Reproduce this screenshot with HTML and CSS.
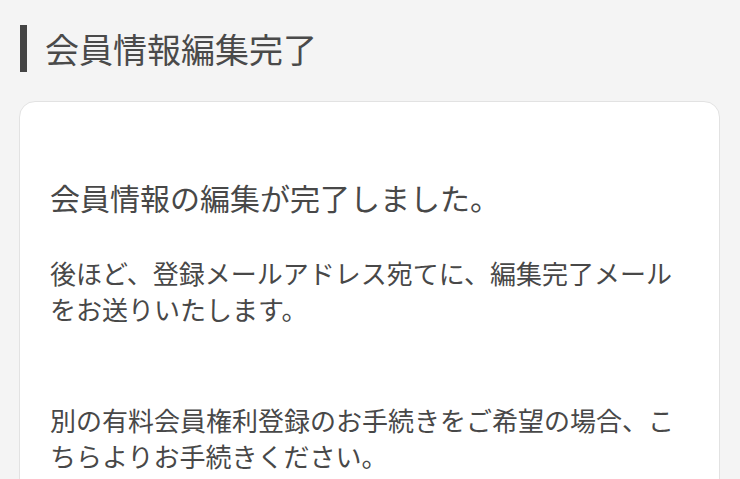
FILE: index.html
```html
<!DOCTYPE html>
<html lang="ja">
<head>
    <meta charset="UTF-8">
    <meta name="viewport" content="width=device-width, initial-scale=1.0">
    <title>会員情報編集完了</title>
    <link rel="stylesheet" href="styles.css">
</head>
<body>
    <div class="page">
        <h1 class="page-title">会員情報編集完了</h1>

        <div class="card">
            <h2 class="card-heading">会員情報の編集が完了しました。</h2>
            <p class="message">後ほど、登録メールアドレス宛てに、編集完了メールをお送りいたします。</p>
            <p class="message message-gap">別の有料会員権利登録のお手続きをご希望の場合、こちらよりお手続きください。</p>
        </div>
    </div>
</body>
</html>
```

FILE: styles.css
```css
body {
    margin: 0;
    background: #f4f4f4;
    font-family: "Noto Sans CJK JP", "Noto Sans", sans-serif;
    color: #484848;
}
.page {
    padding: 25px 20px 0 19px;
}
.page-title {
    margin: 0 0 0 1px;
    padding-left: 18px;
    border-left: 7px solid #444;
    height: 47px;
    line-height: 47px;
    font-size: 34px;
    font-weight: normal;
    color: #4a4a4a;
}
.card {
    margin-top: 29px;
    background: #fff;
    border: 1px solid #e2e2e2;
    border-radius: 16px;
    padding: 75px 30px 40px;
}
.card-heading {
    margin: 0;
    font-size: 30px;
    line-height: 40px;
    font-weight: normal;
}
.message {
    margin: 38px 0 0;
    font-size: 26px;
    line-height: 36px;
}
.message-gap {
    margin-top: 75px;
}
```
